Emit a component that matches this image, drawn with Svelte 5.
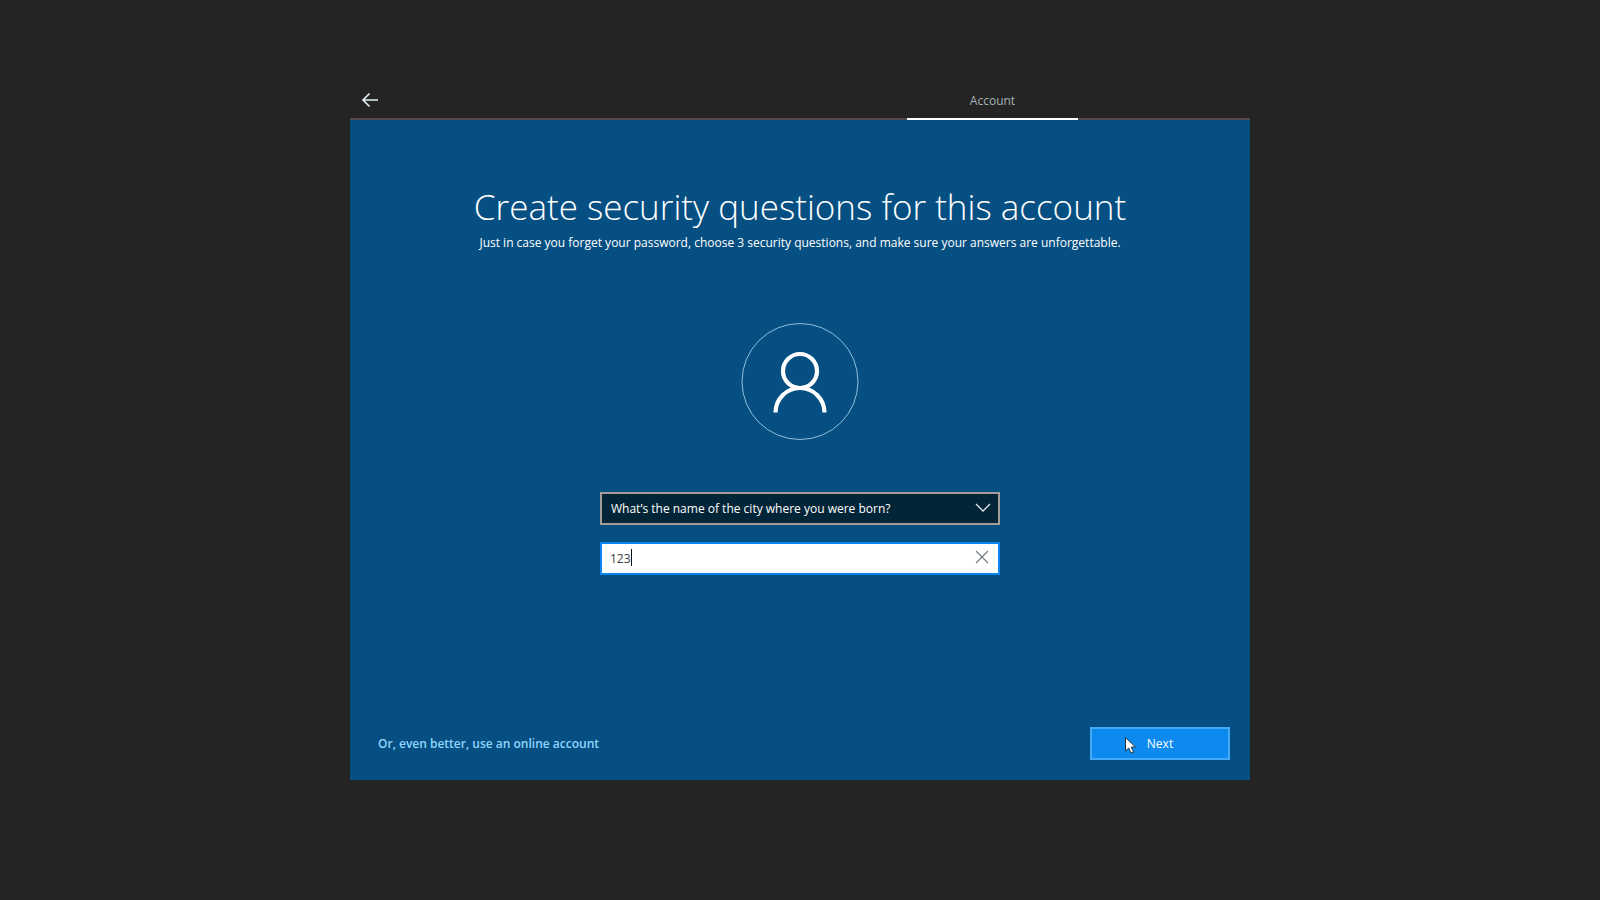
<script>
  let question = $state('city');
  let answer = $state('123');
</script>

<div class="page">
  <div class="window">
    <header>
      <button class="back" type="button" aria-label="Back">
        <svg width="18" height="16" viewBox="0 0 18 16" aria-hidden="true">
          <path d="M17 8H2M8.500 1.500L2 8L8.500 14.500" fill="none" stroke="currentColor" stroke-width="1.600" />
        </svg>
      </button>
      <div class="tab">Account</div>
    </header>

    <main>
      <h1>Create security questions for this account</h1>
      <p>Just in case you forget your password, choose 3 security questions, and make sure your answers are unforgettable.</p>

      <svg class="avatar" width="118" height="118" viewBox="0 0 118 118" aria-hidden="true">
        <circle cx="59" cy="58.500" r="58" fill="none" stroke="#8fbfdc" stroke-width="1" />
        <circle cx="59" cy="48" r="17" fill="none" stroke="#fff" stroke-width="4.200" />
        <path d="M34.500 89.500A24.500 24.500 0 0 1 83.500 89.500" fill="none" stroke="#fff" stroke-width="4.200" />
      </svg>

      <form id="security" onsubmit={(e) => e.preventDefault()}>
        <div class="field">
          <select aria-label="Security question" bind:value={question}>
            <option value="city">What’s the name of the city where you were born?</option>
          </select>
          <svg class="chevron" width="16" height="10" viewBox="0 0 16 10" aria-hidden="true">
            <path d="M1 1L8 8L15 1" fill="none" stroke="#e4edf0" stroke-width="1.300" />
          </svg>
        </div>
        <div class="field">
          <input type="text" aria-label="Your answer" autocomplete="off" bind:value={answer} />
          <span class="caret" style="--length: {answer.length}"></span>
          <button class="clear" type="button" aria-label="Clear" onclick={() => (answer = '')}>
            <svg width="14" height="14" viewBox="0 0 14 14" aria-hidden="true">
              <path d="M1 1L13 13M13 1L1 13" fill="none" stroke="#6d7d85" stroke-width="1.100" />
            </svg>
          </button>
        </div>
      </form>

      <footer>
        <a href="#online">Or, even better, use an online account</a>
        <button class="next" type="submit" form="security">
          Next
          <svg class="pointer" width="14" height="19" viewBox="0 0 14 19" aria-hidden="true">
            <path d="M1.500 1.500V15L4.700 12L7 17L9.500 16L7.300 11H11.500Z" fill="#fff" stroke="#263746" stroke-width="1" />
          </svg>
        </button>
      </footer>
    </main>
  </div>
</div>

<style>
  :global(body) {
    margin: 0;
    background: #242424;
  }

  .page {
    box-sizing: border-box;
    min-height: 100vh;
    padding: 80px 24px;
    font: 12px/20px "Segoe UI", "Open Sans", "Noto Sans", sans-serif;
    color: #fff;
  }

  .window {
    max-width: 900px;
    margin: 0 auto;
  }

  header {
    display: grid;
    grid-template-columns: 557px 171px 1fr;
    height: 38px;
    border-bottom: 2px solid #54494a;
  }

  button {
    font: inherit;
    padding: 0;
    border: 0;
    background: none;
    color: inherit;
  }

  .back {
    justify-self: start;
    display: grid;
    place-items: center;
    width: 40px;
    height: 40px;
    color: #e3f0f5;
  }

  .tab {
    height: 38px;
    line-height: 42px;
    border-bottom: 2px solid #fff;
    text-align: center;
    color: #a3b2b6;
  }

  main {
    box-sizing: border-box;
    display: flex;
    flex-direction: column;
    align-items: center;
    min-height: 660px;
    padding: 61px 20px 20px;
    background: #064f82;
  }

  h1 {
    margin: 0;
    font-size: 35px;
    line-height: 52px;
    font-weight: 300;
    text-align: center;
  }

  p {
    margin: 0;
    text-align: center;
  }

  .avatar {
    margin-top: 70px;
  }

  form {
    display: grid;
    gap: 17px;
    width: 100%;
    max-width: 400px;
    margin-top: 51px;
  }

  .field {
    position: relative;
    display: flex;
  }

  select,
  input {
    box-sizing: border-box;
    width: 100%;
    height: 33px;
    padding: 0 40px 0 8px;
    border-radius: 0;
    font: inherit;
    outline: 0;
  }

  select {
    appearance: none;
    padding-left: 9px;
    border: 2px solid #a39c97;
    background: #032538;
    color: #fff;
  }

  input {
    border: 2px solid #0a84ee;
    background: #fff;
    color: #34424a;
    caret-color: transparent;
  }

  .chevron {
    position: absolute;
    right: 9px;
    top: 11px;
    pointer-events: none;
  }

  .caret {
    position: absolute;
    left: calc(10px + var(--length) * 1ch);
    top: 7px;
    width: 1px;
    height: 17px;
    background: #111;
  }

  .clear {
    position: absolute;
    right: 3px;
    top: 1px;
    display: grid;
    place-items: center;
    width: 30px;
    height: 28px;
  }

  footer {
    display: flex;
    justify-content: space-between;
    align-items: center;
    align-self: stretch;
    margin-top: auto;
    padding-left: 8px;
  }

  a {
    color: #8fd6ff;
    font-weight: 600;
    text-decoration: none;
  }

  .next {
    position: relative;
    box-sizing: border-box;
    width: 140px;
    height: 33px;
    border: 2px solid #45aaf5;
    background: #0c8af0;
  }

  .pointer {
    position: absolute;
    left: 32px;
    top: 7px;
  }
</style>
